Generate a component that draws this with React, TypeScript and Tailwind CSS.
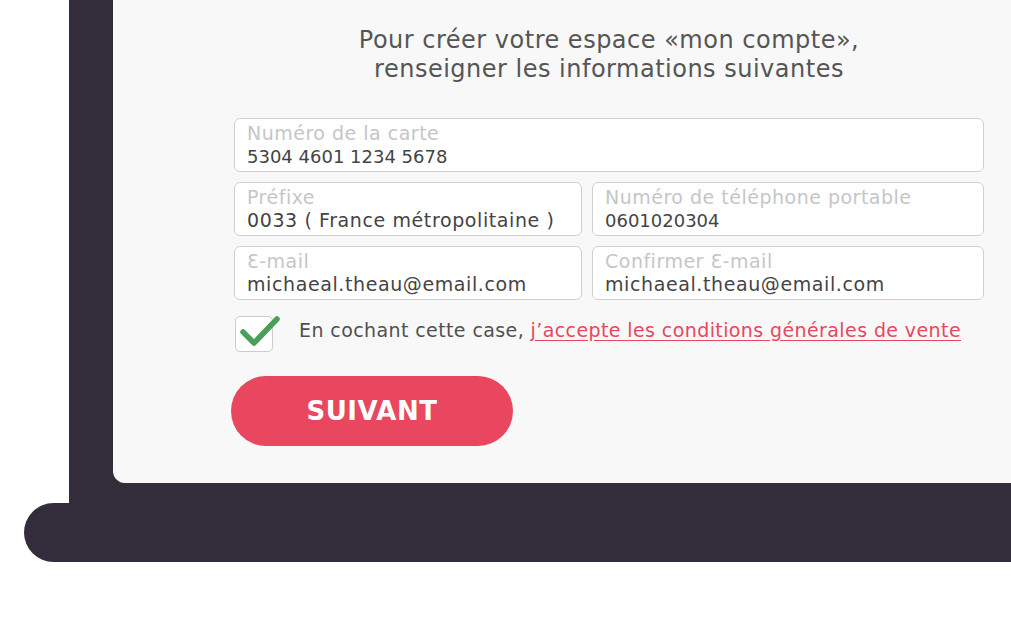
const fields = [
  [{ label: "Numéro de la carte", value: "5304 4601 1234 5678", numeric: true }],
  [
    { label: "Préfixe", value: "0033 ( France métropolitaine )" },
    { label: "Numéro de téléphone portable", value: "0601020304", numeric: true },
  ],
  [
    { label: "Ɛ-mail", value: "michaeal.theau@email.com" },
    { label: "Confirmer Ɛ-mail", value: "michaeal.theau@email.com" },
  ],
];

function Field({
  label,
  value,
  numeric,
  wide,
}: {
  label: string;
  value: string;
  numeric?: boolean;
  wide?: boolean;
}) {
  return (
    <div
      className={`h-[54px] rounded-[6px] border border-[#cfcfcf] bg-white pl-[12px] pt-[3px] ${
        wide ? "w-full" : ""
      }`}
    >
      <div className="text-[19px] leading-[23px] tracking-[0.5px] text-[#c6c6c6]">{label}</div>
      <div
        className={
          numeric
            ? "text-[18px] leading-[23px] text-[#444444]"
            : "text-[19px] leading-[23px] tracking-[0.6px] text-[#444444]"
        }
      >
        {value}
      </div>
    </div>
  );
}

export default function App() {
  return (
    <div
      className="h-[627px] w-[1011px] overflow-hidden bg-white"
      style={{ fontFamily: '"DejaVu Sans", "Noto Sans", sans-serif' }}
    >
      <div className="ml-[69px] bg-[#332d3b] pb-[20px] pl-[44px]">
        <div className="h-[483px] rounded-bl-[12px] bg-[#f8f8f8] pl-[121px] pt-[26px]">
          <div className="w-[750px]">
            <h1 className="text-center text-[24px] leading-[29px] tracking-[0.5px] text-[#555555]">
              Pour créer votre espace «mon compte»,
              <br />
              renseigner les informations suivantes
            </h1>

            <div className="mt-[34px] flex flex-col gap-[10px]">
              <Field {...fields[0][0]} wide />
              <div className="grid grid-cols-[348px_392px] gap-[10px]">
                <Field {...fields[1][0]} />
                <Field {...fields[1][1]} />
              </div>
              <div className="grid grid-cols-[348px_392px] gap-[10px]">
                <Field {...fields[2][0]} />
                <Field {...fields[2][1]} />
              </div>
            </div>

            <div className="mt-[16px] flex items-center">
              <div className="relative ml-[1px] h-[36px] w-[38px] rounded-[5px] border border-[#cccccc] bg-white">
                <svg
                  className="absolute left-[4px] top-[-4px]"
                  width="40"
                  height="36"
                  viewBox="0 0 40 36"
                >
                  <path
                    d="M3 19 L14 30 L37 6"
                    fill="none"
                    stroke="#4a9f5a"
                    strokeWidth="5.5"
                    strokeLinecap="round"
                    strokeLinejoin="round"
                  />
                </svg>
              </div>
              <p className="-mt-[8px] ml-[26px] text-[19px] tracking-[0.4px] text-[#505050]">
                En cochant cette case,{" "}
                <a href="#" className="text-[#e8475e] underline underline-offset-[3px]">
                  j’accepte les conditions générales de vente
                </a>
              </p>
            </div>

            <button className="mt-[24px] -ml-[3px] h-[70px] w-[282px] rounded-full bg-[#e8475f] text-[26px] font-bold tracking-[0.5px] text-white">
              SUIVANT
            </button>
          </div>
        </div>
      </div>
      <div className="ml-[24px] h-[59px] rounded-l-[30px] bg-[#332d3b]" />
    </div>
  );
}
